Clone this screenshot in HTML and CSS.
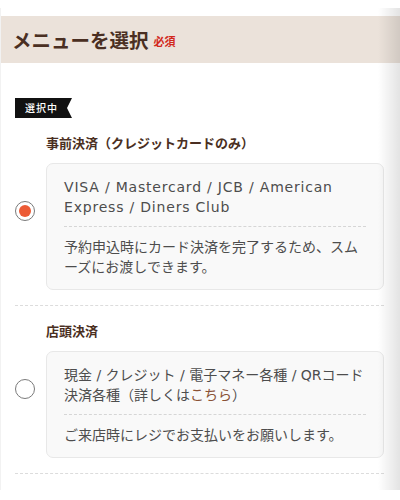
FILE: index.html
```html
<!DOCTYPE html>
<html lang="ja">
  <head>
    <meta charset="UTF-8" />
    <meta name="viewport" content="width=device-width, initial-scale=1.0" />
    <title>メニューを選択</title>
    <link rel="stylesheet" href="styles.css">
  </head>
  <body>
    <div class="page">
      <div class="section-head">
        <h2 class="section-title">メニューを選択</h2>
        <span class="required">必須</span>
      </div>

      <div class="menu-list">
        <div class="menu-item">
          <div class="selected-badge">選択中</div>
          <div class="menu-row">
            <div class="radio-col">
              <span class="radio checked"></span>
            </div>
            <div class="menu-body">
              <div class="menu-name">事前決済（クレジットカードのみ）</div>
              <div class="menu-card">
                <p class="card-text"><span class="latin">VISA / Mastercard / JCB / American Express / Diners Club</span></p>
                <p class="card-note">予約申込時にカード決済を完了するため、スムーズにお渡しできます。</p>
              </div>
            </div>
          </div>
        </div>

        <div class="menu-item">
          <div class="menu-row">
            <div class="radio-col">
              <span class="radio"></span>
            </div>
            <div class="menu-body">
              <div class="menu-name">店頭決済</div>
              <div class="menu-card">
                <p class="card-text">現金 / クレジット / 電子マネー各種 / QRコード決済各種（詳しくは<a href="#" class="card-link">こちら</a>）</p>
                <p class="card-note">ご来店時にレジでお支払いをお願いします。</p>
              </div>
            </div>
          </div>
        </div>
      </div>
    </div>
  </body>
</html>
```

FILE: styles.css
```css
body {
  margin: 0;
  background-color: #fff;
  font-family: "Noto Sans CJK JP", "Noto Sans", sans-serif;
  -webkit-font-smoothing: antialiased;
}

.page {
  position: relative;
  width: 400px;
  height: 482px;
  margin-top: 8px;
  padding-top: 8px;
  box-sizing: border-box;
  border-left: 1px solid #f2f2f2;
  overflow: hidden;
}

/* right edge shading */
.page::after {
  content: "";
  position: absolute;
  top: 0;
  right: 0;
  bottom: 0;
  width: 22px;
  background: linear-gradient(to right, rgba(0, 0, 0, 0), rgba(0, 0, 0, 0.11));
  pointer-events: none;
}

.section-head {
  display: flex;
  align-items: center;
  height: 47px;
  padding-left: 11px;
  background-color: #ebe2da;
}

.section-title {
  margin: 0;
  font-size: 19.5px;
  font-weight: 700;
  color: #4a2f22;
}

.required {
  margin-left: 5px;
  margin-top: 2px;
  font-size: 11px;
  font-weight: 700;
  color: #d2281c;
}

.menu-list {
  padding: 30px 16px 0 14px;
}

.menu-item {
  padding-bottom: 15px;
  border-bottom: 1px dashed #dcdcdc;
}

.menu-item + .menu-item {
  padding-top: 15px;
}

.selected-badge {
  display: inline-block;
  width: 57px;
  height: 20px;
  box-sizing: border-box;
  padding-left: 10px;
  background-color: #111;
  color: #fff;
  font-size: 10px;
  font-weight: 500;
  line-height: 20px;
  letter-spacing: 1px;
  clip-path: polygon(0 0, 100% 0, calc(100% - 5px) 50%, 100% 100%, 0 100%);
  margin-bottom: 15px;
}

.menu-row {
  display: flex;
  align-items: center;
}

.radio-col {
  width: 31px;
  flex-shrink: 0;
  margin-top: -2px;
}

.radio {
  display: flex;
  align-items: center;
  justify-content: center;
  width: 20px;
  height: 20px;
  box-sizing: border-box;
  border: 1.5px solid #7a7a7a;
  border-radius: 50%;
  background-color: #fff;
}

.radio.checked::before {
  content: "";
  width: 12px;
  height: 12px;
  border-radius: 50%;
  background-color: #ec5a35;
}

.menu-body {
  flex: 1;
}

.menu-name {
  font-size: 13px;
  font-weight: 700;
  line-height: 20px;
  color: #4a2f22;
  margin-bottom: 10px;
}

.menu-card {
  padding: 13px 17px 12px 17px;
  border: 1px solid #e8e8e8;
  border-radius: 7px;
  background-color: #f9f9f9;
}

.card-text,
.card-note {
  margin: 0;
  font-family: "DejaVu Sans", "Noto Sans CJK JP", sans-serif;
  font-size: 14px;
  line-height: 20px;
  color: #4d4d4d;
}

.card-text {
  padding-bottom: 9px;
  border-bottom: 1px dashed #d6d6d6;
}

.card-text .latin {
  letter-spacing: 0.8px;
}

.card-note {
  padding-top: 10px;
}

.card-link {
  color: #8a5236;
  text-decoration: none;
}
```
